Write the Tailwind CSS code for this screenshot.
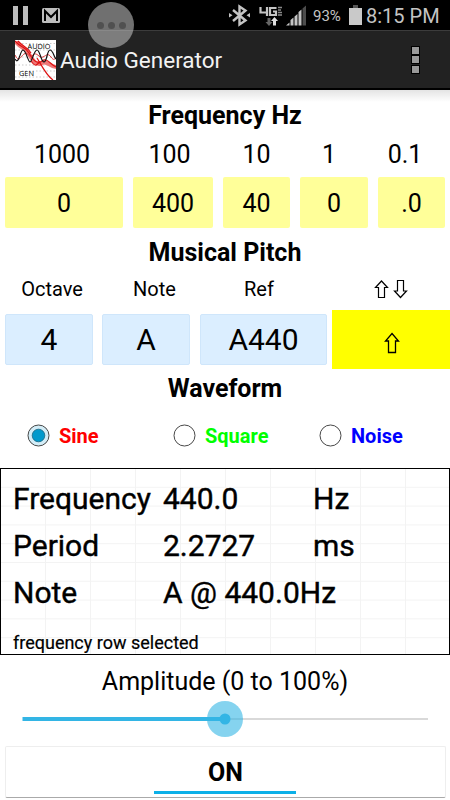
<!DOCTYPE html>
<html lang="en">
<head>
    <meta charset="UTF-8">
    <meta name="viewport" content="width=device-width, initial-scale=1.0">
    <title>Audio Generator</title>
    <script src="https://cdn.jsdelivr.net/npm/@tailwindcss/browser@4"></script>
</head>
<body class="bg-white">
<div class="relative w-[450px] h-[800px] overflow-hidden bg-white text-black font-[Roboto,sans-serif] text-[25px] leading-none whitespace-nowrap">

    <!-- Status bar -->
    <div class="h-[30px] bg-black flex items-center text-[#c4c4c4]">
        <svg class="w-[65px] h-[30px]" viewBox="0 0 65 30">
            <path fill="#bdbdbd" d="M13 6h5v19h-5zM23 6h5v19h-5z"/>
            <rect x="42" y="8" width="18" height="15" rx="1.5" fill="#bdbdbd"/>
            <path d="M45 21V11l6 6 6-6v10" fill="none" stroke="#000" stroke-width="2"/>
        </svg>
        <svg class="ml-auto w-[84px] h-[30px]" viewBox="225 0 84 30">
            <path d="M233 10l12.500 10.500-6 4V6.500l6 4L233 21" fill="none" stroke="#c4c4c4" stroke-width="2.400"/>
            <path d="M229 13l3.500 2.200-3.500 2.200zM250 13l-3.500 2.200 3.500 2.200z" fill="#c4c4c4"/>
            <path d="M260.500 7v5.500h7M267 7v9M276.500 8h-6.500v7h6v-3.500h-3" fill="none" stroke="#c4c4c4" stroke-width="2.200"/>
            <path d="M278 7.500h4M278 10h3M278 12.500h4M278 15h4" stroke="#8a8a8a" stroke-width="1.300"/>
            <path d="M267.500 18h3v4h2l-3.500 4-3.500-4h2z" fill="#666"/>
            <path d="M274.500 17l3.500 4h-2v4.500h-3v-4.500h-2z" fill="#e0e0e0"/>
            <path d="M286 25.500l3.500-3v3zM290.500 20l3-2.500v8h-3zM294.500 16.500l3-2.500v11.500h-3zM298.500 12l3-2.500v16h-3z" fill="#c4c4c4"/>
            <path d="M302.500 8.500l3.500-3v20h-3.500z" fill="#4c4c4c"/>
        </svg>
        <span class="w-[36px] pl-1 pt-[2px] text-[15px]">93%</span>
        <svg class="w-[22px] h-[30px]" viewBox="0 0 22 30">
            <path fill="#555" d="M8 5h5v3H8z"/>
            <path fill="#c9c9c9" d="M4 8h13v17H4z"/>
        </svg>
        <span class="w-[73px] pt-[2px] text-[20px] ml-[-1px] mr-[11px]">8:15 PM</span>
    </div>

    <!-- Action bar -->
    <div class="h-[60px] bg-[#222] border-t border-[#3c3c3c] border-b-2 border-b-black flex items-center pl-[15px]">
        <svg class="w-[41px] h-[40px]" viewBox="0 0 41 40">
            <path fill="#fff" d="M0 0h41v40H0z"/>
            <path d="M0 3.500h41M0 10h41M0 17h41M0 25h41M0 31h41M0 37h41" stroke="#bbb" stroke-width=".8" stroke-dasharray="1.500 2"/>
            <path d="M1 2c6 7 9 5 13 12s8 12 13 9 8 4 14 4" fill="none" stroke="#e77" stroke-width="4"/>
            <path d="M0 1c7 8 10 5 14 12s8 12 13 8 9 4 14 6M3 1c5 6 9 5 13 12M16 21c6 8 5 2 10 1M22 18C27 26 31 35 38 40" fill="none" stroke="#d11" stroke-width="1.200"/>
            <path d="M0 15c4 8 5 2 9-1s5 5 9 1 6 4 10 2 5-4 8 0 3 2 5 1" fill="none" stroke="#d33"/>
            <path d="M0 19c4 7 5-9 8-9s5 12 7 12 4-12 7-12 4 12 7 12 3-12 6-12 4 7 6 9" fill="none" stroke="#111" stroke-width="1.200"/>
            <text x="12.500" y="8.500" font-family="Open Sans, sans-serif" font-size="8" textLength="23" lengthAdjust="spacingAndGlyphs">AUDIO</text>
            <text x="4" y="36" font-family="Open Sans, sans-serif" font-size="8" textLength="15" lengthAdjust="spacingAndGlyphs">GEN</text>
        </svg>
        <h1 class="ml-[4px] pt-[2px] text-[22.5px] text-[#f3f3f3]">Audio Generator</h1>
        <div class="ml-auto mr-[31px] flex flex-col gap-[2.5px]">
            <i class="size-[7px] bg-[#999] shadow-[0_0_0_1px_#000]"></i>
            <i class="size-[7px] bg-[#999] shadow-[0_0_0_1px_#000]"></i>
            <i class="size-[7px] bg-[#999] shadow-[0_0_0_1px_#000]"></i>
        </div>
    </div>

    <!-- Floating assistant button -->
    <div class="absolute left-[88px] top-[2px] size-[46px] rounded-full bg-[#bbb]/60 flex items-center justify-center gap-1">
        <i class="size-[7px] rounded-full bg-[#505050]"></i>
        <i class="size-[7px] rounded-full bg-[#505050]"></i>
        <i class="size-[7px] rounded-full bg-[#505050]"></i>
    </div>

    <div class="h-[12px] bg-linear-to-b from-[#e4e4e4] to-white"></div>

    <!-- Frequency -->
    <h2 class="h-[27px] flex items-center justify-center font-bold">Frequency Hz</h2>
    <div class="h-[48px] pt-[2px] px-[5px] grid grid-cols-[118px_80px_67px_68px_67px] gap-[10px] items-center text-center">
        <span class="pr-1">1000</span><span class="pr-[7px]">100</span><span>10</span><span class="pr-[10px]">1</span><span class="pr-[14px] -mr-[1px]">0.1</span>
    </div>
    <div class="h-[51px] px-[5px] grid grid-cols-[118px_80px_67px_68px_67px] gap-[10px] *:pt-[2px] *:rounded-xs *:bg-[#ffff99] *:flex *:items-center *:justify-center">
        <button>0</button><button>400</button><button>40</button><button>0</button><button>.0</button>
    </div>

    <!-- Musical pitch -->
    <h2 class="h-[48px] flex items-center justify-center font-bold">Musical Pitch</h2>
    <div class="h-[34px] px-[5px] grid grid-cols-[88px_88px_127px_108px] gap-[10px] items-center text-center text-[20px] pb-[8px]">
        <span class="pl-[6px]">Octave</span><span class="pl-[15px]">Note</span><span class="pr-[11px]">Ref</span>
        <svg class="w-[34px] h-[20px] ml-[36px]" viewBox="0 0 34 20" fill="none" stroke="#000" stroke-width="1.200">
            <path d="M7.500 2l6 6.500H10.500V18.500H4.500V8.500h-3z"/>
            <path d="M26.500 18.500l6-6.500H29.500V1.500H23.500V12h-3z"/>
        </svg>
    </div>
    <div class="h-[59px] flex items-center pl-[5px] text-[30px]">
        <button class="w-[88px] h-[51px] pt-px rounded-xs bg-[#dbeeff] border border-[#cfe6fb]">4</button>
        <button class="w-[88px] h-[51px] pt-px ml-[9px] rounded-xs bg-[#dbeeff] border border-[#cfe6fb]">A</button>
        <button class="w-[127px] h-[51px] pt-px ml-[10px] rounded-xs bg-[#dbeeff] border border-[#cfe6fb]">A440</button>
        <button class="flex-1 h-full ml-[5px] bg-[#ffff00] flex items-center justify-center">
            <svg class="w-[16px] h-[22px] mt-[6px] ml-px" viewBox="0 0 16 22" fill="none" stroke="#000" stroke-width="1.300">
                <path d="M8 1.500l6.500 7.500H11.500V20.500H4.500V9h-3z"/>
            </svg>
        </button>
    </div>

    <!-- Waveform -->
    <h2 class="h-[38px] pt-px flex items-center justify-center font-bold">Waveform</h2>
    <div class="h-[61px] pb-[4px] pl-[27px] grid grid-cols-[146px_146px_1fr] items-center text-[20px] font-bold">
        <label class="flex items-center gap-[9px] text-[#ff0000]">
            <svg class="size-[23px]" viewBox="0 0 23 23"><circle cx="11.500" cy="11.500" r="10.500" fill="#d4edf7" stroke="#333" stroke-width=".9"/><circle cx="11.500" cy="11.500" r="6.300" fill="#0099cc" stroke="#176580" stroke-width=".8"/></svg>
            Sine
        </label>
        <label class="flex items-center gap-[9px] text-[#00ff00]">
            <svg class="size-[23px]" viewBox="0 0 23 23"><circle cx="11.500" cy="11.500" r="10.500" fill="#fff" stroke="#333" stroke-width=".9"/></svg>
            Square
        </label>
        <label class="flex items-center gap-[9px] text-[#0000ff]">
            <svg class="size-[23px]" viewBox="0 0 23 23"><circle cx="11.500" cy="11.500" r="10.500" fill="#fff" stroke="#333" stroke-width=".9"/></svg>
            Noise
        </label>
    </div>

    <!-- Readout -->
    <div class="h-[187px] border border-black pl-[12px] pt-[6px] text-[30px] [-webkit-text-stroke:0.4px_#000] bg-[linear-gradient(to_right,#f3f3f3_1px,transparent_1px),linear-gradient(to_bottom,#f3f3f3_1px,transparent_1px)] bg-size-[45px_18.8px] bg-position-[-1px_-1px]">
        <div class="grid grid-cols-[150px_150px_1fr] auto-rows-[47px] items-center">
            <span>Frequency</span><span>440.0</span><span>Hz</span>
            <span>Period</span><span>2.2727</span><span>ms</span>
            <span>Note</span><span class="col-span-2">A @ 440.0Hz</span>
        </div>
        <p class="mt-[18px] text-[18px] [-webkit-text-stroke:0.2px_#000]">frequency row selected</p>
    </div>

    <!-- Amplitude -->
    <p class="h-[53px] flex items-center justify-center">Amplitude (0 to 100%)</p>
    <div class="h-[38px] -mt-[8px] flex justify-center">
        <svg class="w-[406px] h-[38px]" viewBox="22 700 406 38">
            <path d="M225 719h203" stroke="#ccc" stroke-width="1.300"/>
            <path d="M22.500 719H225" stroke="#33b5e5" stroke-width="4"/>
            <circle cx="225" cy="719" r="18" fill="#33b5e5" fill-opacity=".6"/>
            <circle cx="225" cy="719" r="5.500" fill="#33b5e5"/>
        </svg>
    </div>

    <!-- Toggle -->
    <button class="relative block mt-[8px] ml-[5px] w-[441px] h-[52px] pt-px rounded-xs border border-[#eee] border-b-[#aaa] font-bold">
        ON
        <i class="absolute left-[148px] bottom-[3px] w-[142px] h-[3px] bg-[#0cb0e8]"></i>
    </button>
</div>
</body>
</html>
